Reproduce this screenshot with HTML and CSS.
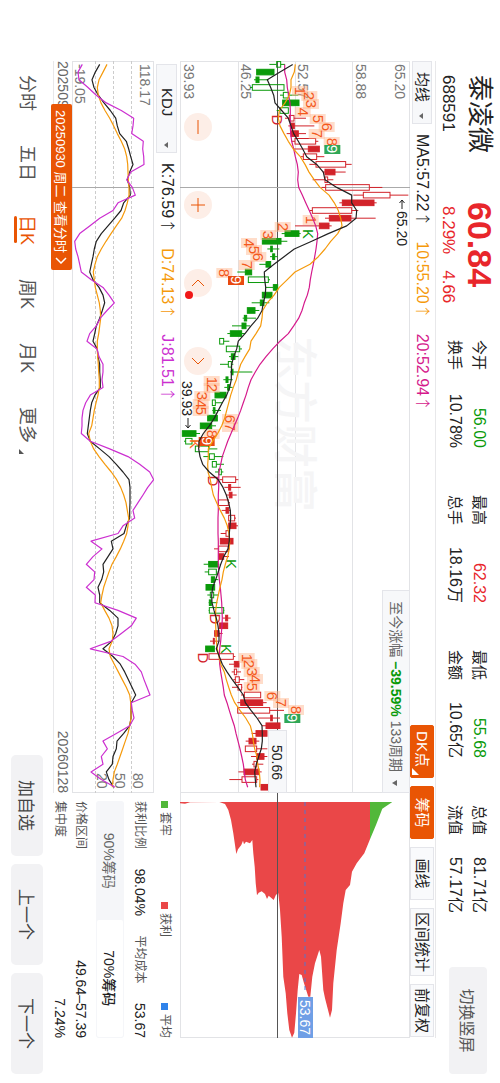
FILE: index.html
```html
<!DOCTYPE html>
<html lang="zh-CN">
<head>
    <meta charset="UTF-8">
    <meta name="viewport" content="width=device-width, initial-scale=1.0">
    <title>泰凌微 688591</title>
    <link rel="stylesheet" href="styles.css">
</head>
<body>
    <main class="screen">
        <header class="quote">
            <div class="stock">
                <h1>泰凌微</h1>
                <p>688591</p>
            </div>
            <div class="price">
                <strong>60.84</strong>
                <p><span>8.29%</span><span>4.66</span></p>
            </div>
            <dl class="stats">
                <div><dt>今开</dt><dd class="down">56.00</dd></div>
                <div><dt>最高</dt><dd class="up">62.32</dd></div>
                <div><dt>最低</dt><dd class="down">55.68</dd></div>
                <div><dt>总值</dt><dd>81.71亿</dd></div>
                <div><dt>换手</dt><dd>10.78%</dd></div>
                <div><dt>总手</dt><dd>18.16万</dd></div>
                <div><dt>金额</dt><dd>10.65亿</dd></div>
                <div><dt>流值</dt><dd>57.17亿</dd></div>
            </dl>
            <button type="button" class="rotate">切换竖屏</button>
        </header>

        <section class="panels">
            <div class="toolbar">
                <label class="picker">
                    <select aria-label="主图指标"><option>均线</option></select>
                </label>
                <div class="values">
                    <span>MA5:57.22<i>↑</i></span>
                    <span class="orange">10:55.20<i>↑</i></span>
                    <span class="pink">20:52.94<i>↑</i></span>
                </div>
                <div class="tools">
                    <button type="button" class="active more">DK点</button>
                    <button type="button" class="active">筹码</button>
                    <button type="button">画线</button>
                    <button type="button">区间统计</button>
                    <button type="button">前复权</button>
                </div>
            </div>

            <div class="plots">
                <div class="plot">
                    <svg id="price-chart" viewBox="0 0 732 230"></svg>
                    <button type="button" class="range">至今涨幅 <b>−39.59%</b> 133周期</button>
                    <div class="controls">
                        <button type="button" aria-label="缩小"><svg viewBox="0 0 28 28"><path d="M7 14H21"/></svg></button>
                        <button type="button" aria-label="放大"><svg viewBox="0 0 28 28"><path d="M7 14H21M14 7V21"/></svg></button>
                        <button type="button" aria-label="向左" class="dot"><svg viewBox="0 0 28 28"><path d="M17 8L11 14L17 20"/></svg></button>
                        <button type="button" aria-label="向右"><svg viewBox="0 0 28 28"><path d="M11 8L17 14L11 20"/></svg></button>
                    </div>
                </div>
                <div class="plot">
                    <svg id="chip-chart" viewBox="0 0 245 230"></svg>
                </div>

                <div class="kdj">
                    <div class="kdj-bar">
                        <label class="picker wide">
                            <select aria-label="副图指标"><option>KDJ</option></select>
                        </label>
                        <div class="values">
                            <span>K:76.59<i>↑</i></span>
                            <span class="orange">D:74.13<i>↑</i></span>
                            <span class="violet">J:81.51<i>↑</i></span>
                        </div>
                    </div>
                    <svg id="kdj-chart" viewBox="0 0 732 82"></svg>
                    <div class="dates">
                        <span>20250903</span>
                        <span>20260128</span>
                        <button type="button" class="day">20250930 周二 查看分时<svg viewBox="0 0 7 12"><path d="M1 1L6 6L1 11"/></svg></button>
                    </div>
                </div>

                <div class="chips">
                    <ul class="legend">
                        <li class="trapped">套牢</li>
                        <li class="profit">获利</li>
                        <li class="average">平均</li>
                    </ul>
                    <div class="chip-row"><span>获利比例</span><b>98.04%</b><span>平均成本</span><b>53.67</b></div>
                    <div class="switch">
                        <button type="button">90%筹码</button>
                        <button type="button" class="on">70%筹码</button>
                    </div>
                    <div class="chip-row"><span>价格区间</span><b>49.64–57.39</b></div>
                    <div class="chip-row"><span>集中度</span><b>7.24%</b></div>
                </div>
            </div>
        </section>

        <footer class="bottom">
            <nav class="tabs">
                <a href="#">分时</a>
                <a href="#">五日</a>
                <a href="#" class="current">日K</a>
                <a href="#">周K</a>
                <a href="#">月K</a>
                <a href="#" class="more">更多</a>
            </nav>
            <div class="actions">
                <button type="button">加自选</button>
                <button type="button">上一个</button>
                <button type="button">下一个</button>
            </div>
        </footer>
    </main>
    <script src="charts.js"></script>
</body>
</html>
```
FILE: styles.css
```css
* {
    box-sizing: border-box;
}

html, body {
    height: 100%;
    overflow: hidden;
}

body {
    margin: 0;
    background: #fff;
    font-family: "Liberation Sans", "Noto Sans CJK SC", sans-serif;
    color: #222;
}

h1, p, dl, dd, ul {
    margin: 0;
    padding: 0;
}

button, select {
    font-family: inherit;
    color: inherit;
    margin: 0;
    padding: 0;
    border: none;
    background: none;
    cursor: pointer;
}

svg {
    display: block;
    width: 100%;
}

/* landscape page shown on a portrait phone */
.screen {
    width: 100vh;
    height: 100vw;
    display: flex;
    flex-direction: column;
    transform-origin: 0 0;
    transform: translateX(100vw) rotate(90deg);
}

/* quote header */
.quote {
    display: flex;
    align-items: flex-start;
    height: 64px;
    padding: 4px 9px 0 75px;
}

.stock {
    width: 127px;
}

.stock h1 {
    font-size: 26px;
    font-weight: 400;
    line-height: 32px;
}

.stock p, .price p {
    font-size: 17px;
    line-height: 32px;
}

.price {
    width: 138px;
    color: #e8262b;
}

.price strong {
    display: block;
    font-size: 34px;
    line-height: 32px;
}

.price p {
    display: flex;
    gap: 16px;
    padding-left: 4px;
}

.stats {
    display: grid;
    grid-template-columns: repeat(4, 108px);
    column-gap: 47px;
    padding-top: 5px;
    line-height: 24px;
}

.stats div {
    display: flex;
    justify-content: space-between;
}

.stats dt {
    font-size: 15px;
}

.stats dd {
    font-size: 16px;
}

.up {
    color: #e8262b;
}

.down {
    color: #0a9a0a;
}

.rotate {
    width: 107px;
    height: 38px;
    margin: 9px 0 0 auto;
    border-radius: 4px;
    background: #f2f2f4;
    color: #555;
    font-size: 16px;
}

/* chart panels */
.panels {
    margin: 0 45px 0 61px;
}

.toolbar {
    display: flex;
    align-items: center;
    height: 26px;
    border-top: 1px solid #e8e8ea;
}

.picker {
    position: relative;
    width: 63px;
    height: 20px;
    border: 1px solid #e4e5ea;
    background: #f7f8fa;
}

.picker.wide {
    width: 89px;
    margin-left: 3px;
}

.picker select {
    appearance: none;
    display: block;
    width: 100%;
    height: 100%;
    padding-left: 10px;
    font-size: 15px;
    line-height: 18px;
}

.picker.wide select {
    padding-left: 23px;
}

.picker::after {
    content: "";
    position: absolute;
    right: 4px;
    top: 8px;
    border: 3px solid transparent;
    border-top: 4px solid #666;
    border-bottom: none;
}

.values {
    display: flex;
    gap: 18px;
    padding-left: 10px;
    font-size: 16px;
    line-height: 24px;
}

.values i {
    display: inline-block;
    width: 12px;
    font-style: normal;
    font-size: 15px;
    font-family: "Noto Sans CJK SC", sans-serif;
    font-weight: 300;
    line-height: 16px;
}

.orange {
    color: #f59a0c;
}

.pink {
    color: #d51a8c;
}

.violet {
    color: #cc2fd0;
}

.tools {
    display: flex;
    gap: 8px;
    margin-left: auto;
    margin-right: 1px;
}

.tools button {
    position: relative;
    min-width: 53px;
    height: 24px;
    padding: 0 3px;
    border: 1px solid #e4e5ea;
    background: #f9fafc;
    font-size: 15px;
    line-height: 22px;
}

.tools .active {
    border-color: #e95504;
    border-radius: 2px;
    background: #e95504;
    color: #fff;
}

.tools .more {
    padding-right: 8px;
}

.tools .more::after {
    content: "";
    position: absolute;
    right: 2px;
    bottom: 1px;
    border-left: 7px solid transparent;
    border-bottom: 7px solid #fff;
}

.plots {
    display: grid;
    grid-template-columns: 732fr 245fr;
}

.plot {
    position: relative;
}

.range {
    position: absolute;
    right: 0;
    top: 0;
    height: 28px;
    padding: 0 20px 0 10px;
    border: 1px solid #e4e5ea;
    background: #f7f8fa;
    color: #666;
    font-size: 14px;
    line-height: 26px;
    white-space: nowrap;
}

.range b {
    color: #0a9a0a;
}

.range::after {
    content: "";
    position: absolute;
    right: 6px;
    top: 12px;
    border: 3px solid transparent;
    border-top: 5px solid #666;
    border-bottom: none;
}

.controls {
    position: absolute;
    left: 52px;
    bottom: 4px;
    display: flex;
    gap: 50px;
}

.controls button {
    position: relative;
    width: 28px;
    height: 28px;
    border-radius: 50%;
    background: #fdeee7;
}

.controls path {
    fill: none;
    stroke: #e95504;
}

.controls .dot::after {
    content: "";
    position: absolute;
    right: -2px;
    bottom: 1px;
    width: 8px;
    height: 8px;
    border-radius: 50%;
    background: #f01818;
}

/* kdj panel */
.kdj-bar {
    display: flex;
    align-items: center;
    height: 26px;
}

.kdj .picker {
    height: 21px;
}

.dates {
    position: relative;
    display: flex;
    justify-content: space-between;
    height: 19px;
    border-bottom: 1px solid #e8e8ea;
    color: #666;
    font-size: 14px;
    line-height: 18px;
}

.day {
    position: absolute;
    left: 43px;
    top: 0;
    display: flex;
    align-items: center;
    gap: 4px;
    height: 21px;
    padding: 0 6px;
    border-radius: 2px;
    background: #e95504;
    color: #fff;
    font-size: 13px;
    white-space: nowrap;
}

.day svg {
    width: 7px;
}

.day path {
    fill: none;
    stroke: #fff;
    stroke-width: 1.5;
}

/* chip distribution figures */
.chips {
    padding: 5px 0 0 8px;
    color: #555;
    font-size: 12px;
}

.legend {
    display: flex;
    justify-content: space-between;
    list-style: none;
    line-height: 20px;
}

.legend li::before {
    content: "";
    display: inline-block;
    width: 7px;
    height: 7px;
    margin-right: 4px;
}

.trapped::before {
    background: #52b83a;
}

.profit::before {
    background: #ea4748;
}

.average::before {
    background: #2f83ea;
}

.chip-row {
    display: flex;
    justify-content: space-between;
    align-items: center;
    line-height: 21px;
}

.legend + .chip-row {
    padding: 5px 0;
}

.chip-row b {
    color: #222;
    font-size: 14px;
    font-weight: 400;
}

.switch {
    display: flex;
    height: 28px;
    margin-bottom: 5px;
    padding: 1px;
    border-radius: 3px;
    background: #f5f6f9;
}

.switch button {
    flex: 1;
    border-radius: 2px;
    color: #666;
    font-size: 14px;
}

.switch .on {
    background: #fff;
    color: #222;
    font-weight: 500;
}

/* bottom bar */
.bottom {
    flex: 1;
    display: flex;
    justify-content: space-between;
    align-items: center;
    padding: 0 9px 6px 75px;
}

.tabs {
    display: flex;
    gap: 34px;
}

.tabs a {
    position: relative;
    color: #555;
    font-size: 18px;
    line-height: 26px;
    text-decoration: none;
}

.tabs .current {
    color: #e95504;
}

.tabs .current::after {
    content: "";
    position: absolute;
    left: 1px;
    right: 2px;
    bottom: 0;
    height: 3px;
    border-radius: 2px;
    background: #e95504;
}

.tabs .more::after {
    content: "";
    position: absolute;
    right: -11px;
    bottom: 5px;
    border-left: 5px solid transparent;
    border-bottom: 5px solid #555;
}

.actions {
    display: flex;
    gap: 8px;
}

.actions button {
    width: 101px;
    height: 32px;
    border-radius: 5px;
    background: #f2f2f4;
    color: #444;
    font-size: 17px;
}

/* svg */
.grid {
    stroke: #e2e3e6;
}

.dash {
    stroke: #ccc;
    stroke-dasharray: 3 2;
}

.cross {
    stroke: #555;
}

.cross.light {
    stroke: #aaa;
}

.line {
    fill: none;
    stroke-linejoin: round;
    stroke-width: 1.2;
}

.axis {
    fill: #777;
    font-size: 14px;
}

.note {
    fill: #222;
    font-size: 14px;
}

.mark {
    font-size: 15px;
    text-anchor: middle;
}

.watermark {
    fill: #f5f5f6;
    font-size: 44px;
    font-weight: 500;
}
```
FILE: charts.js
```js
const RED = '#d2232a', GREEN = '#0a9a0a', BLACK = '#222', ORANGE = '#f59a0c';
const STEP = 7.69;
const xAt = i => 3.4 + STEP * i;

function add(svg, tag, attrs, text) {
    const el = document.createElementNS('http://www.w3.org/2000/svg', tag);
    for (const key in attrs) el.setAttribute(key, attrs[key]);
    if (text !== undefined) el.textContent = text;
    svg.appendChild(el);
    return el;
}

function hline(svg, y, width, cls) {
    add(svg, 'line', {x1: 0, x2: width, y1: y, y2: y, class: cls});
}

function vline(svg, x, height, cls) {
    add(svg, 'line', {x1: x, x2: x, y1: 0, y2: height, class: cls});
}

function series(svg, values, toY, color) {
    const points = values.map((v, i) => xAt(i).toFixed(1) + ',' + toY(v).toFixed(1)).join(' ');
    add(svg, 'polyline', {points: points, stroke: color, class: 'line'});
}

// ---- price chart: low, high, body low, body high, kind (upper case = filled) ----
const candles = [
    [268,315,290,302,'g'],[230,282,230,282,'G'],[222,265,228,237,'G'],[210,312,217,312,'g'],[300,355,310,325,'g'],
    [308,357,308,357,'G'],[290,325,300,325,'g'],[315,378,328,342,'r'],[325,403,333,343,'R'],[320,378,333,355,'R'],
    [335,415,345,407,'r'],[340,418,385,418,'R'],[362,433,370,410,'r'],[388,515,408,497,'r'],[428,497,435,465,'R'],
    [398,460,435,443,'r'],[425,607,437,568,'r'],[520,685,550,630,'r'],[478,590,487,582,'R'],[390,535,397,515,'r'],
    [435,587,448,513,'R'],[345,455,418,447,'R'],[305,362,315,357,'G'],[247,322,247,303,'G'],[262,298,272,277,'G'],
    [270,293,278,284,'G'],[238,272,258,272,'G'],[172,215,196,215,'G'],[205,270,205,265,'g'],[256,293,280,293,'G'],
    [247,276,247,276,'G'],[215,268,241,252,'G'],[202,238,202,225,'G'],[188,228,193,200,'G'],[156,210,186,198,'G'],
    [142,195,151,185,'G'],[119,148,119,131,'g'],[139,186,139,179,'g'],[147,175,154,165,'G'],[120,160,145,154,'g'],
    [150,217,155,159,'G'],[130,158,138,144,'G'],[133,158,143,148,'G'],[105,138,105,138,'G'],[97,127,97,106,'g'],
    [97,123,100,105,'G'],[83,112,83,112,'G'],[61,108,61,95,'G'],[7,60,7,48,'G'],[12,50,17,36,'g'],
    [46,112,46,86,'g'],[70,130,88,103,'g'],[97,132,97,109,'g'],[105,130,116,124,'g'],[118,175,128,167,'r'],
    [133,182,146,152,'R'],[138,170,148,156,'R'],[115,150,115,145,'r'],[125,152,138,146,'R'],[146,168,146,164,'r'],
    [146,174,146,168,'R'],[122,150,138,148,'r'],[121,159,121,159,'R'],[102,150,116,145,'r'],[116,147,116,131,'R'],
    [71,118,86,113,'G'],[74,112,86,109,'g'],[94,115,94,104,'G'],[78,104,78,104,'G'],[82,117,91,101,'g'],
    [86,112,88,94,'G'],[86,133,88,131,'g'],[128,152,137,143,'R'],[118,143,118,143,'R'],[103,128,104,117,'R'],
    [90,118,100,103,'R'],[77,103,77,103,'G'],[87,166,87,160,'r'],[147,177,163,177,'R'],[155,183,163,170,'r'],
    [160,193,166,178,'r'],[156,187,174,185,'r'],[183,242,193,242,'r'],[172,260,182,248,'R'],[173,312,173,269,'r'],
    [234,300,272,277,'R'],[246,300,258,300,'R'],[215,261,228,261,'R'],[197,238,207,228,'R'],[196,262,196,230,'r'],
    [213,262,230,252,'R'],[216,250,222,230,'r'],[175,245,192,237,'R'],[148,235,186,230,'r'],[243,264,243,264,'R']
];

const ma5 = [338,300,262,272,281,285,305,325,333,341,355,368,380,410,430,435,470,515,515,530,528,500,445,395,343,
    312,282,253,254,257,256,250,246,233,213,195,175,170,161,155,154,154,149,140,127,115,103,88,70,57,
    56,60,68,88,115,129,139,146,151,152,150,148,148,144,131,122,115,107,98,95,96,102,109,114,117,
    117,109,118,127,141,157,174,190,196,213,231,246,247,247,244,236,229,224,226,228];
const ma10 = [346,343,333,333,328,315,298,295,300,312,325,340,361,375,387,403,420,447,463,475,482,486,473,452,435,
    415,390,345,322,298,282,262,248,246,242,228,213,209,195,182,175,169,160,152,146,140,134,125,113,98,
    85,85,83,84,91,95,100,110,121,133,142,147,149,148,143,136,130,126,120,115,110,107,107,107,108,
    109,112,117,122,133,139,146,154,164,180,197,211,217,220,224,231,233,238,240,239];
const ma20 = [314,314,320,322,326,330,331,331,331,332,335,341,346,352,355,353,356,367,377,388,398,407,413,411,408,
    404,400,395,391,388,382,373,366,356,341,325,300,278,258,240,226,213,205,198,190,182,173,163,153,143,
    135,127,122,117,116,116,115,115,115,114,114,114,115,115,115,115,116,118,121,123,125,126,127,126,124,
    122,119,118,119,122,126,130,133,141,148,155,163,168,174,180,185,190,193,196,203];

// nine-turn counters: label, x, level
const counters = [
    ['1',30,360],['2',35,388],['3',43,393],['4',51,368],['5',58,413],['6',66,440],['7',73,410],['8',81,455],
    ['1',159,392],['2',166,308],['3',174,265],['4',182,207],['5',189,222],['6',196,235],['7',204,200],['8',212,133],
    ['1',320,95],['2',327,95],['3',335,67],['4',343,62],['5',350,62],['6',358,150],['7',366,150],['8',373,95],
    ['1',597,200],['2',603,208],['3',611,215],['4',618,225],['5',626,215],['6',635,277],['7',642,303],['8',649,348]
];
const nines = [[88,457,'#2fa757'],[219,168,'#e94a10'],[380,80,'#e94a10'],[657,337,'#2fa757']];
const signals = [['D',59,291,RED],['K',173,385,GREEN],['K',383,45,'#ff6a20'],['D',420,98,RED],['K',503,152,GREEN],
    ['D',558,105,RED],['K',588,138,GREEN],['D',597,68,RED]];

const price = document.getElementById('price-chart');
const priceY = v => 230 - v / 3;

[0.5, 57.5, 114.5, 171.5, 229.5].forEach(y => hline(price, y, 732, 'grid'));
vline(price, 0.5, 230, 'grid');
vline(price, 731.5, 230, 'grid');
add(price, 'text', {x: 275, y: 131, class: 'watermark'}, '东方财富');
[['65.20', 660], ['58.88', 543], ['52.57', 370], ['46.25', 198], ['39.93', 27]].forEach(a =>
    add(price, 'text', {x: 3, y: priceY(a[1]) + 5, class: 'axis'}, a[0]));
hline(price, 132.5, 732, 'cross');
vline(price, 126.5, 230, 'cross light');

candles.forEach((c, i) => {
    const x = xAt(i);
    const color = c[4].toLowerCase() === 'g' ? GREEN : RED;
    const solid = c[4] === c[4].toUpperCase();
    add(price, 'line', {x1: x, x2: x, y1: priceY(c[1]), y2: priceY(c[3]), stroke: color});
    add(price, 'line', {x1: x, x2: x, y1: priceY(c[2]), y2: priceY(c[0]), stroke: color});
    add(price, 'rect', {
        x: x - 2.8, width: 5.6, y: priceY(c[3]), height: (c[3] - c[2]) / 3,
        fill: solid ? color : 'none', stroke: color
    });
});

counters.forEach(c => add(price, 'rect', {x: c[1] - 5, y: priceY(c[2]) - 8, width: 10, height: 16, fill: '#ffb38a', 'fill-opacity': 0.45}));
counters.forEach(c => add(price, 'text', {x: c[1], y: priceY(c[2]) + 5, fill: '#f4591c', class: 'mark'}, c[0]));
nines.forEach(n => {
    add(price, 'rect', {x: n[0] - 4, y: priceY(n[1]) - 8, width: 9, height: 16, fill: n[2]});
    add(price, 'text', {x: n[0], y: priceY(n[1]) + 5, fill: '#fff', class: 'mark'}, '9');
});
signals.forEach(s => add(price, 'text', {x: s[1], y: priceY(s[2]) + 5, fill: s[3], class: 'mark'}, s[0]));

series(price, ma20, priceY, '#d51a8c');
series(price, ma10, priceY, ORANGE);
series(price, ma5, priceY, BLACK);

// highest and lowest price notes
add(price, 'path', {d: 'M139 8H148M142 5.500L139 8L142 10.500', stroke: BLACK, fill: 'none'});
add(price, 'text', {x: 150, y: 13, class: 'note'}, '65.20');
add(price, 'text', {x: 320, y: 228, class: 'note'}, '39.93');
add(price, 'path', {d: 'M357 222H367M364 219.500L367 222L364 224.500', stroke: BLACK, fill: 'none'});

add(price, 'rect', {x: 669.5, y: 123.5, width: 62, height: 18, fill: '#f7f8fa', stroke: '#e4e5ea'});
add(price, 'text', {x: 684, y: 138, class: 'note'}, '50.66');

// ---- chip distribution: level, length ----
const profit = [[0,0],[0,4],[15,5],[30,1],[118,0],[135,6],[145,24],[153,54],[160,94],[165,129],[169,156],[174,142],[184,129],
    [189,116],[192,127],[198,119],[210,124],[217,114],[220,154],[224,194],[227,244],[231,280],[236,272],[245,268],
    [255,276],[261,291],[266,281],[281,294],[288,278],[295,274],[300,324],[305,404],[310,524],[317,574],[322,634],
    [328,684],[336,707],[343,692],[348,634],[353,564],[358,516],[365,519],[372,544],[385,584],[391,584],[397,524],
    [405,484],[418,444],[423,464],[430,564],[435,589],[450,647],[456,624],[460,544],[470,444],[482,364],[490,304],
    [497,264],[510,249],[516,209],[530,184],[553,154],[570,112],[570,0]];
const trapped = [[570,0],[570,112],[588,69],[607,20],[637,0]];

const chip = document.getElementById('chip-chart');
const shape = list => list.map(p => (9 + p[1] / 3).toFixed(1) + ',' + priceY(p[0]).toFixed(1)).join(' ');

hline(chip, 0.5, 245, 'grid');
hline(chip, 229.5, 245, 'grid');
vline(chip, 244.5, 230, 'grid');
add(chip, 'polygon', {points: shape(profit), fill: '#ea4748'});
add(chip, 'polygon', {points: shape(trapped), fill: '#52b83a'});
hline(chip, 132.5, 245, 'cross');
add(chip, 'line', {x1: 9, x2: 199, y1: 105, y2: 105, stroke: '#5577cc', 'stroke-dasharray': '4 4'});
add(chip, 'rect', {x: 204, y: 97, width: 41, height: 15, fill: '#6f9fe6'});
add(chip, 'text', {x: 207, y: 110, fill: '#fff', 'font-size': 14}, '53.67');

// ---- kdj ----
const k = [150,137,127,133,146,163,182,198,203,210,230,237,243,250,240,233,240,242,222,214,195,175,155,140,134,
    130,125,120,130,148,160,165,158,150,140,135,130,143,145,150,150,152,152,136,126,122,119,116,113,122,
    150,178,200,220,238,241,241,241,240,240,230,223,185,190,175,160,162,156,145,150,150,180,205,205,198,
    187,160,190,212,225,236,247,258,245,244,244,240,222,202,200,190,188,170,178,192];
const d = [172,160,148,143,146,154,166,180,192,203,215,225,231,234,235,236,238,238,233,226,216,200,184,169,155,
    143,136,131,134,137,143,149,152,153,150,147,143,143,144,146,147,149,149,145,139,134,130,126,117,122,
    132,148,166,185,201,213,222,229,233,237,235,231,222,212,200,187,178,170,162,157,153,165,178,187,190,
    188,178,182,194,206,218,230,240,243,244,244,240,235,227,219,211,203,194,190,188];
const j = [98,85,88,115,140,170,215,252,250,246,281,279,282,283,243,231,248,257,205,190,150,120,90,75,78,
    85,90,95,125,160,178,194,172,152,140,120,112,142,148,160,160,157,160,122,108,100,97,97,95,122,
    180,235,270,300,312,294,280,265,250,255,220,205,124,157,130,110,135,133,110,137,136,205,260,245,215,
    185,122,220,256,275,283,292,301,245,248,253,240,200,160,173,155,160,124,155,196];

const kdj = document.getElementById('kdj-chart');
const kdjY = v => (313 - v) / 3;

hline(kdj, 0.5, 732, 'grid');
hline(kdj, 81.5, 732, 'grid');
vline(kdj, 0.5, 82, 'grid');
vline(kdj, 731.5, 82, 'grid');
[22.5, 40.5, 58.5].forEach(y => hline(kdj, y, 732, 'dash'));
vline(kdj, 126.5, 82, 'cross light');
add(kdj, 'text', {x: 3, y: 14, class: 'axis'}, '118.17');
add(kdj, 'text', {x: 3, y: 79, class: 'axis'}, '-19.05');
[['80', 21], ['50', 39], ['20', 57]].forEach(a => add(kdj, 'text', {x: 712, y: a[1], class: 'axis'}, a[0]));
series(kdj, k, kdjY, BLACK);
series(kdj, d, kdjY, ORANGE);
series(kdj, j, kdjY, '#cc2fd0');
```
